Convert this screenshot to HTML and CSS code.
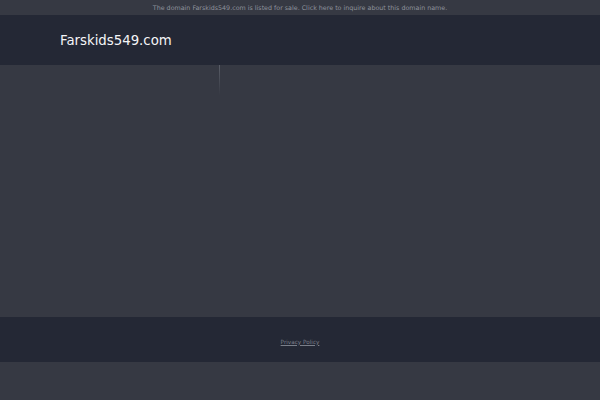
FILE: index.html
```html
<!DOCTYPE html>
<html>
<head>
<meta charset="utf-8">
<link rel="stylesheet" href="styles.css">
</head>
<body>
<div class="topbar"><a class="sale" href="#">The domain Farskids549.com is listed for sale. Click here to inquire about this domain name.</a></div>
<header class="header"><div class="logo">Farskids549.com</div></header>
<main class="main"><div class="rule"></div></main>
<footer class="footer"><a class="privacy" href="#">Privacy Policy</a></footer>
</body>
</html>
```
FILE: styles.css
```css
html, body {
  margin: 0;
  padding: 0;
  background: #363943;
  font-family: "DejaVu Sans", sans-serif;
}
.topbar {
  height: 15px;
  display: flex;
  align-items: center;
  justify-content: center;
  background: #363943;
}
.sale {
  font-size: 6.35px;
  color: #8e929c;
  text-decoration: none;
  line-height: 15px;
}
.header {
  height: 50px;
  background: #242835;
  display: flex;
  align-items: center;
  padding-left: 60px;
}
.logo {
  color: #f4f5f7;
  font-size: 13.3px;
  line-height: 1;
  padding-top: 2px;
}
.main {
  height: 252px;
  padding-left: 219px;
  background: #363943;
}
.rule {
  width: 1px;
  height: 30px;
  background: linear-gradient(to bottom, #5a5e68, #363943);
}
.footer {
  height: 45px;
  background: #242835;
  display: flex;
  align-items: center;
  justify-content: center;
}
.privacy {
  font-size: 5.7px;
  color: #7a7f8a;
  text-decoration: underline;
  padding-top: 4px;
}
```
